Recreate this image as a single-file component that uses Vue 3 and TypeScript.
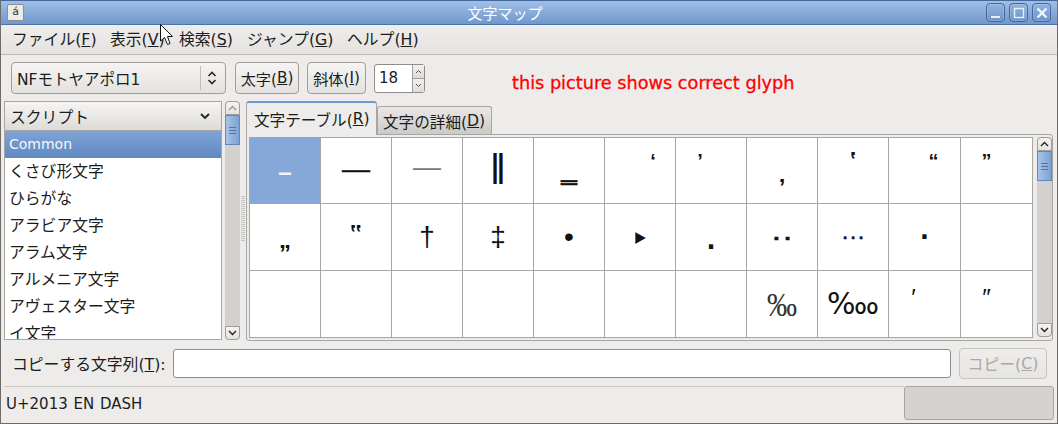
<script setup lang="ts">
interface MenuItem {
    label: string;
    key: string;
}

interface Glyph {
    ch: string;
    size?: number;
    dx?: number;
    dy?: number;
    sx?: number;
    sy?: number;
    color?: string;
    stroke?: number;
    serif?: boolean;
    bold?: boolean;
}

const menus: MenuItem[] = [
    { label: "ファイル", key: "F" },
    { label: "表示", key: "V" },
    { label: "検索", key: "S" },
    { label: "ジャンプ", key: "G" },
    { label: "ヘルプ", key: "H" },
];

const scripts = [
    "くさび形文字",
    "ひらがな",
    "アラビア文字",
    "アラム文字",
    "アルメニア文字",
    "アヴェスター文字",
    "イ文字",
];

const glyphs: Glyph[] = [
    { ch: "–", size: 24, dy: 1, bold: true },
    { ch: "—", size: 28, dy: -2, stroke: 0.4 },
    { ch: "―", size: 28, dy: -4, color: "#777" },
    { ch: "‖", size: 28, dy: -1, sy: 1.5, bold: true },
    { ch: "‗", size: 28, dy: -1, stroke: 0.6 },
    { ch: "‘", size: 20, dx: 13, dy: -10, bold: true },
    { ch: "’", size: 20, dx: -11, dy: -10, bold: true },
    { ch: "‚", size: 24, dy: 3, bold: true },
    { ch: "‛", size: 24, dy: -10, bold: true },
    { ch: "“", size: 20, dx: 9, dy: -10, bold: true },
    { ch: "”", size: 20, dx: -10, dy: -10, bold: true },
    { ch: "„", size: 24, dy: 3, bold: true },
    { ch: "‟", size: 24, dy: -3, bold: true },
    { ch: "†", size: 28 },
    { ch: "‡", size: 28 },
    { ch: "•", size: 28 },
    { ch: "‣", size: 32, dy: 2 },
    { ch: "․", size: 24, dy: 4, bold: true },
    { ch: "‥", size: 24, dy: -5, sx: 1.4, stroke: 0.3 },
    { ch: "…", size: 24, dy: -6, sx: 1.05, stroke: 0.3 },
    { ch: "‧", size: 24, bold: true },
    { ch: "" },
    { ch: "" },
    { ch: "" },
    { ch: "" },
    { ch: "" },
    { ch: "" },
    { ch: "" },
    { ch: "" },
    { ch: "‰", size: 30, sy: 1.15, serif: true, color: "#333" },
    { ch: "‱", size: 30 },
    { ch: "′", size: 24, dx: -11, dy: -6 },
    { ch: "″", size: 24, dx: -10, dy: -6 },
];

function glyphStyle(g: Glyph) {
    return {
        fontSize: (g.size ?? 24) + "px",
        color: g.color,
        WebkitTextStroke: g.stroke ? `${g.stroke}px currentColor` : undefined,
        transform: `translate(${g.dx ?? 0}px, ${g.dy ?? 0}px) scale(${g.sx ?? 1}, ${g.sy ?? 1})`,
    };
}
</script>

<template>
    <div class="win">
        <div class="titlebar">
            <div class="winicon">á</div>
            <div class="wintitle">文字マップ</div>
            <div class="winbtns">
                <div class="winbtn">
                    <svg width="12" height="12" viewBox="0 0 12 12"><rect x="1" y="9" width="9" height="2" fill="#e8eff9" /></svg>
                </div>
                <div class="winbtn">
                    <svg width="12" height="12" viewBox="0 0 12 12"><rect x="1.5" y="1.5" width="9" height="9" fill="none" stroke="#e8eff9" stroke-width="1.4" /></svg>
                </div>
                <div class="winbtn">
                    <svg width="12" height="12" viewBox="0 0 12 12"><path d="M1.5 1.5 L10.5 10.5 M10.5 1.5 L1.5 10.5" stroke="#f1f5fb" stroke-width="2.4" /></svg>
                </div>
            </div>
        </div>

        <div class="menubar">
            <span v-for="m in menus" :key="m.key" class="menuitem">{{ m.label }}(<u>{{ m.key }}</u>)</span>
        </div>

        <div class="toolbar">
            <div class="combo">
                <span class="combotext">NFモトヤアポロ1</span>
                <span class="combosep"></span>
                <svg width="10" height="18" viewBox="0 0 10 18"><path d="M1.5 7 L5 3.5 L8.5 7 M1.5 11 L5 14.5 L8.5 11" fill="none" stroke="#2a2a2a" stroke-width="1.6" /></svg>
            </div>
            <div class="btn bold">太字(<u>B</u>)</div>
            <div class="btn italic">斜体(<u>I</u>)</div>
            <div class="spin">
                <div class="spinval">18</div>
                <div class="spinbtns">
                    <div class="spinbtn"><svg width="7" height="5" viewBox="0 0 7 5"><path d="M1 4 L3.5 1.5 L6 4" fill="none" stroke="#555" /></svg></div>
                    <div class="spinbtn"><svg width="7" height="5" viewBox="0 0 7 5"><path d="M1 1 L3.5 3.5 L6 1" fill="none" stroke="#555" /></svg></div>
                </div>
            </div>
            <div class="note">this picture shows correct glyph</div>
        </div>

        <div class="main">
            <div class="listbox">
                <div class="listhead">
                    <span>スクリプト</span>
                    <svg width="10" height="7" viewBox="0 0 10 7"><path d="M1 1 L5 5 L9 1" fill="none" stroke="#222" stroke-width="1.8" /></svg>
                </div>
                <div class="listrows">
                    <div class="listrow selected">Common</div>
                    <div v-for="s in scripts" :key="s" class="listrow">{{ s }}</div>
                </div>
            </div>
            <div class="vscroll left">
                <div class="sbtn up"><svg width="9" height="6" viewBox="0 0 9 6"><path d="M1 5 L4.5 1.5 L8 5" fill="none" stroke="#9a9a9a" stroke-width="1.4" /></svg></div>
                <div class="thumb"><span></span><span></span><span></span></div>
                <div class="strough"></div>
                <div class="sbtn down"><svg width="9" height="6" viewBox="0 0 9 6"><path d="M1 1 L4.5 4.5 L8 1" fill="none" stroke="#222" stroke-width="1.4" /></svg></div>
            </div>
            <div class="handle"><div class="grip"></div></div>

            <div class="notebook">
                <div class="tabs">
                    <div class="tab active">文字テーブル(<u>R</u>)</div>
                    <div class="tab">文字の詳細(<u>D</u>)</div>
                </div>
                <div class="pane">
                    <div class="chargrid">
                        <div v-for="(g, i) in glyphs" :key="i" class="cell" :class="{ sel: i === 0 }">
                            <span class="glyph" :class="{ serif: g.serif, heavy: g.bold }" :style="glyphStyle(g)">{{ g.ch }}</span>
                        </div>
                    </div>
                    <div class="vscroll right">
                        <div class="sbtn up"><svg width="9" height="6" viewBox="0 0 9 6"><path d="M1 5 L4.5 1.5 L8 5" fill="none" stroke="#222" stroke-width="1.4" /></svg></div>
                        <div class="thumb"><span></span><span></span><span></span></div>
                        <div class="strough"></div>
                        <div class="sbtn down"><svg width="9" height="6" viewBox="0 0 9 6"><path d="M1 1 L4.5 4.5 L8 1" fill="none" stroke="#222" stroke-width="1.4" /></svg></div>
                    </div>
                </div>
            </div>
        </div>

        <div class="copyrow">
            <label class="copylabel">コピーする文字列(<u>T</u>):</label>
            <div class="copyentry"></div>
            <div class="copybtn">コピー(<u>C</u>)</div>
        </div>

        <div class="statusrow">
            <div class="statustext">U+2013 EN DASH</div>
            <div class="statusblock"></div>
        </div>

        <svg class="cursor" width="16" height="24" viewBox="0 0 16 24">
            <path d="M0.5 0.5 L0.5 17 L4.5 13.5 L7.5 20.5 L10 19.5 L7.5 12.5 L12.5 12.5 Z" fill="#fff" stroke="#111" stroke-width="1" />
        </svg>
    </div>
</template>

<style scoped>
.win {
    position: relative;
    width: 1058px;
    height: 424px;
    box-sizing: border-box;
    display: flex;
    flex-direction: column;
    background-color: #edecea;
    border-left: 1px solid #6d6c6a;
    border-right: 1px solid #6d6c6a;
    border-bottom: 1px solid #6d6c6a;
    font-family: "DejaVu Sans", "Noto Sans CJK JP", sans-serif;
    font-size: 15.8px;
    color: #1c1c1c;
    overflow: hidden;
}

.titlebar {
    height: 25px;
    box-sizing: border-box;
    margin: 0 -1px;
    padding: 0 7px 0 7px;
    display: flex;
    align-items: center;
    background: linear-gradient(#9fbfe5, #7098cc);
    border-top: 1px solid #44689c;
    border-bottom: 1px solid #4d72a8;
}

.winicon {
    width: 15px;
    height: 15px;
    border: 1px solid #8a9099;
    border-radius: 2px;
    background-color: #ecebe6;
    font-size: 11px;
    line-height: 14px;
    text-align: center;
    color: #333;
    margin-top: -1px;
}

.wintitle {
    flex: 1;
    text-align: center;
    color: #fff;
    font-size: 15px;
    margin-top: -1px;
}

.winbtns {
    display: flex;
    gap: 4px;
}

.winbtn {
    width: 19px;
    height: 19px;
    box-sizing: border-box;
    border: 1px solid #44689c;
    border-radius: 4px;
    background: linear-gradient(#92b3de, #6d94c8);
    display: flex;
    align-items: center;
    justify-content: center;
    box-shadow: inset 0 0 0 1px rgba(255, 255, 255, 0.16);
}

.menubar {
    height: 30px;
    box-sizing: border-box;
    display: flex;
    align-items: center;
    background: linear-gradient(#eeedeb, #e4e3e1);
    border-bottom: 1px solid #bdbab5;
    padding: 0 4px 3px 11px;
}

.menuitem:nth-child(1) { width: 98px; }
.menuitem:nth-child(2) { width: 69px; }
.menuitem:nth-child(3) { width: 68px; }
.menuitem:nth-child(4) { width: 100px; }

.toolbar {
    height: 46px;
    box-sizing: border-box;
    display: flex;
    align-items: center;
    padding-left: 10px;
}

.combo {
    width: 215px;
    height: 32px;
    box-sizing: border-box;
    border: 1px solid #a09e9a;
    border-radius: 4px;
    background: linear-gradient(#f5f4f3, #e3e2df);
    display: flex;
    align-items: center;
    padding: 0 8px 0 5px;
}

.combotext {
    flex: 1;
    font-size: 15.5px;
}

.combosep {
    width: 1px;
    height: 24px;
    background-color: #c0bebb;
    margin-right: 6px;
}

.btn {
    height: 32px;
    box-sizing: border-box;
    border: 1px solid #a09e9a;
    border-radius: 4px;
    background: linear-gradient(#f5f4f3, #e3e2df);
    display: flex;
    align-items: center;
    justify-content: center;
    font-size: 15.2px;
}

.bold {
    width: 64px;
    margin-left: 9px;
}

.italic {
    width: 59px;
    margin-left: 8px;
}

.spin {
    width: 51px;
    height: 29px;
    box-sizing: border-box;
    margin-left: 8px;
    display: flex;
    border: 1px solid #8f8d89;
    border-radius: 3px;
    background-color: #fff;
}

.spinval {
    flex: 1;
    padding-left: 4px;
    line-height: 27px;
    font-size: 15px;
}

.spinbtns {
    width: 11px;
    display: flex;
    flex-direction: column;
    border-left: 1px solid #a09e9a;
}

.spinbtn {
    flex: 1;
    display: flex;
    align-items: center;
    justify-content: center;
    background: linear-gradient(#f2f1ef, #dddcd9);
}

.spinbtn + .spinbtn {
    border-top: 1px solid #a09e9a;
}

.note {
    margin-left: 87px;
    margin-top: 10px;
    color: #ff0000;
    font-size: 17.7px;
    font-weight: 500;
    white-space: nowrap;
    -webkit-text-stroke: 0.3px #ff0000;
}

.main {
    height: 239px;
    display: flex;
    padding-left: 3px;
    padding-right: 4px;
}

.listbox {
    width: 218px;
    box-sizing: border-box;
    border: 1px solid #a8a6a2;
    display: flex;
    flex-direction: column;
    background-color: #fff;
    overflow: hidden;
}

.listhead {
    height: 29px;
    flex: none;
    box-sizing: border-box;
    padding: 0 11px 0 5px;
    display: flex;
    align-items: center;
    justify-content: space-between;
    background: linear-gradient(#f6f5f4, #dcdbd8);
    border-bottom: 1px solid #a8a6a2;
}

.listrows {
    flex: 1;
    overflow: hidden;
}

.listrow {
    height: 27px;
    line-height: 27px;
    padding-left: 4px;
    white-space: nowrap;
}

.selected {
    color: #f4f7fb;
    font-size: 14px;
    background: linear-gradient(#7ea3d6, #6089c1);
}

.vscroll {
    width: 15px;
    flex: none;
    display: flex;
    flex-direction: column;
    background-color: #d2d1ce;
    border-radius: 4px;
}

.vscroll.left {
    margin-left: 3px;
}

.vscroll.right {
    margin-left: 4px;
    height: 200px;
}

.sbtn {
    height: 14px;
    flex: none;
    box-sizing: border-box;
    border: 1px solid #a09e9a;
    background: linear-gradient(#f5f4f3, #e3e2df);
    display: flex;
    align-items: center;
    justify-content: center;
}

.sbtn.up {
    border-radius: 4px 4px 0 0;
}

.sbtn.down {
    border-radius: 0 0 4px 4px;
}

.thumb {
    height: 30px;
    flex: none;
    box-sizing: border-box;
    border: 1px solid #5f88bf;
    background: linear-gradient(90deg, #a9c4e7, #7ba1d4);
    display: flex;
    flex-direction: column;
    align-items: center;
    justify-content: center;
    gap: 2px;
}

.thumb span {
    width: 7px;
    height: 1px;
    background-color: #4f76ab;
}

.strough {
    flex: 1;
}

.handle {
    width: 6px;
    flex: none;
    display: flex;
    align-items: center;
    justify-content: center;
}

.grip {
    width: 4px;
    height: 46px;
    background-image: linear-gradient(#c6c4c0 1px, transparent 1px), linear-gradient(90deg, #edecea 1px, transparent 1px);
    background-size: 2px 2px;
    margin-top: -3px;
}

.notebook {
    width: 807px;
    display: flex;
    flex-direction: column;
}

.tabs {
    height: 33px;
    flex: none;
    display: flex;
    align-items: flex-end;
}

.tab {
    width: 115px;
    height: 28px;
    box-sizing: border-box;
    padding: 0 5px;
    display: flex;
    align-items: center;
    white-space: nowrap;
    font-size: 15.6px;
    border: 1px solid #a8a6a2;
    border-bottom: none;
    border-radius: 3px 3px 0 0;
    background: linear-gradient(#e9e8e6, #cbcac7);
}

.tab.active {
    width: 131px;
    height: 34px;
    margin-bottom: -1px;
    padding-left: 7px;
    border-top: 2px solid #6f98cc;
    background: #edecea;
    position: relative;
    z-index: 1;
}

.pane {
    flex: 1;
    box-sizing: border-box;
    border: 1px solid #a8a6a2;
    border-radius: 0 3px 3px 3px;
    display: flex;
    padding: 2px;
}

.chargrid {
    display: grid;
    grid-template-columns: repeat(9, 71px) 72px 72px;
    grid-template-rows: 66px 67px 67px;
    height: 201px;
    width: 784px;
    box-sizing: border-box;
    border-right: 1px solid #a8a6a2;
    border-bottom: 1px solid #a8a6a2;
    background-color: #fff;
}

.cell {
    border-left: 1px solid #a8a6a2;
    border-top: 1px solid #a8a6a2;
    display: flex;
    align-items: center;
    justify-content: center;
    overflow: hidden;
    color: #111;
}

.cell.sel {
    background-color: #86a8d9;
    color: #f2f5fa;
}

.glyph {
    font-family: "Liberation Sans", "DejaVu Sans", sans-serif;
    line-height: 1;
}

.glyph.serif {
    font-family: "Liberation Serif", serif;
}

.glyph.heavy {
    font-weight: 700;
}

.copyrow {
    height: 46px;
    box-sizing: border-box;
    padding: 0 6px 0 11px;
    display: flex;
    align-items: center;
}

.copylabel {
    width: 161px;
    white-space: nowrap;
}

.copyentry {
    width: 778px;
    height: 29px;
    box-sizing: border-box;
    border: 1px solid #8f8d89;
    border-radius: 3px;
    background-color: #fff;
}

.copybtn {
    width: 88px;
    height: 31px;
    box-sizing: border-box;
    margin-left: 8px;
    border: 1px solid #c6c4c0;
    border-radius: 4px;
    background: linear-gradient(#eeedeb, #e6e5e3);
    color: #a9a7a3;
    display: flex;
    align-items: center;
    justify-content: center;
}

.statusrow {
    flex: 1;
    display: flex;
    margin-left: 3px;
    margin-right: 3px;
}

.statustext {
    flex: 1;
    border-top: 1px solid #c9c7c3;
    padding: 8px 0 0 2px;
    font-size: 15px;
    word-spacing: 1px;
}

.statusblock {
    width: 150px;
    height: 34px;
    box-sizing: border-box;
    border: 1px solid #a8a6a2;
    border-radius: 3px;
    background-color: #d4d3d0;
}

.cursor {
    position: absolute;
    left: 159px;
    top: 24px;
}
</style>

<style>
html, body {
    margin: 0;
    background: #edecea;
}
</style>
